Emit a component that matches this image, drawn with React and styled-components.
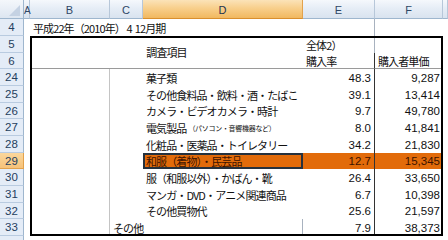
import React from 'react';
import styled, { createGlobalStyle } from 'styled-components';

const GlobalStyle = createGlobalStyle`
	html, body {
		margin: 0;
		padding: 0;
		background: #ffffff;
		overflow: hidden;
	}
`;

const columns = ['A', 'B', 'C', 'D', 'E', 'F', ''];
const rowNames = ['4', '5', '6', '24', '25', '26', '27', '28', '29', '30', '31', '32', '33', ''];
const rowHeights = [17, 17, 16, 17, 17, 16, 17, 17, 16, 17, 17, 16, 17, 17];

const items = [
	{ row: '24', name: '菓子類', rate: '48.3', price: '9,287' },
	{ row: '25', name: 'その他食料品・飲料・酒・たばこ', rate: '39.1', price: '13,414' },
	{ row: '26', name: 'カメラ・ビデオカメラ・時計', rate: '9.7', price: '49,780' },
	{ row: '27', name: '電気製品', note: '（パソコン・音響機器など）', rate: '8.0', price: '41,841' },
	{ row: '28', name: '化粧品・医薬品・トイレタリー', rate: '34.2', price: '21,830' },
	{ row: '29', name: '和服（着物）・民芸品', rate: '12.7', price: '15,345', active: true },
	{ row: '30', name: '服（和服以外）・かばん・靴', rate: '26.4', price: '33,650' },
	{ row: '31', name: 'マンガ・DVD・アニメ関連商品', rate: '6.7', price: '10,398' },
	{ row: '32', name: 'その他買物代', rate: '25.6', price: '21,597' },
	{ row: '33', name: 'その他', rate: '7.9', price: '38,373', other: true },
];

const App = () => {
	return (
		<>
			<GlobalStyle />
			<Sheet>
				<Corner>
					<svg width="24" height="19" viewBox="0 0 24 19">
						<polygon points="20,5 20,16 9,16" fill="#c5d2e3" />
					</svg>
				</Corner>
				{columns.map((c, i) => (
					<ColHead key={c + i} $col={i + 2} $active={c === 'D'} $narrow={c === 'A'}>
						{c}
					</ColHead>
				))}
				{rowNames.map((r, i) => (
					<RowHead key={r + i} $row={i + 2} $active={r === '29'}>
						{r}
					</RowHead>
				))}

				<Cell $col="3 / 8" $row={2}>
					平成22年（2010年） 4&nbsp;&nbsp;12月期
				</Cell>
				<Cell $col="6 / 7" $row="2 / 15" $right="#a8b2bf" />

				<Cell $col="3 / 6" $row="3 / 5" $center $bottom="#9a9a9a">
					調査項目
				</Cell>
				<Cell $col="6 / 8" $row={3}>全体2）</Cell>
				<Cell $col={6} $row={4} $bottom="#9a9a9a" $right="#333">
					購入率
				</Cell>
				<Cell $col={7} $row={4} $bottom="#9a9a9a">
					購入者単価
				</Cell>

				{items.map((it) => {
					const row = rowNames.indexOf(it.row) + 2;
					return (
						<React.Fragment key={it.row}>
							<Cell $col={3} $row={row} $right="#c4c4c4" />
							{it.other ? (
								<Cell $col="4 / 6" $row={row} $right="#a8b2bf">
									{it.name}
								</Cell>
							) : (
								<Cell $col={5} $row={row} $fill={it.active} $selected={it.active}>
									{it.name}
									{it.note && <Note>{it.note}</Note>}
								</Cell>
							)}
							<Cell $col={6} $row={row} $num $fill={it.active} $right="#333">
								{it.rate}
							</Cell>
							<Cell $col={7} $row={row} $num $fill={it.active}>
								{it.price}
							</Cell>
						</React.Fragment>
					);
				})}

				<Frame />
			</Sheet>
		</>
	);
};

const Sheet = styled.div`
	width: 448px;
	height: 240px;
	overflow: hidden;
	display: grid;
	grid-template-columns: 24px 6px 80px 33px 160px 72px 68px 1fr;
	grid-template-rows: 19px ${rowHeights.map((h) => `${h}px`).join(' ')};
	font-family: 'Noto Sans CJK JP', 'Liberation Sans', sans-serif;
	font-size: 11px;
	color: #111;
	background: #fff;
`;

const Corner = styled.div`
	grid-column: 1;
	grid-row: 1;
	background: linear-gradient(#f4f7fb, #dde6f1);
	border-right: 1px solid #9eb6ce;
	border-bottom: 1px solid #9eb6ce;
	box-sizing: border-box;
	svg {
		display: block;
	}
`;

const ColHead = styled.div`
	grid-column: ${(p) => p.$col};
	grid-row: 1;
	position: relative;
	z-index: ${(p) => (p.$narrow ? 1 : 0)};
	display: flex;
	align-items: center;
	justify-content: ${(p) => (p.$narrow ? 'flex-start' : 'center')};
	padding-left: 0;
	padding-top: 2px;
	box-sizing: border-box;
	overflow: ${(p) => (p.$narrow ? 'visible' : 'hidden')};
	font-family: 'Liberation Sans', sans-serif;
	font-size: ${(p) => (p.$narrow ? '10px' : '11px')};
	color: ${(p) => (p.$active ? '#1e3250' : '#2e4665')};
	background: ${(p) =>
		p.$active
			? 'linear-gradient(#fbe3b8 0%, #f8cf8c 45%, #f1b860 100%)'
			: 'linear-gradient(#f5f8fc 0%, #e6edf6 45%, #d9e3ef 100%)'};
	border-right: 1px solid ${(p) => (p.$active ? '#e3a24c' : '#b7c7d9')};
	border-bottom: 1px solid ${(p) => (p.$active ? '#d98f2e' : '#9eb6ce')};
`;

const RowHead = styled.div`
	grid-column: 1;
	grid-row: ${(p) => p.$row};
	display: flex;
	align-items: center;
	justify-content: center;
	box-sizing: border-box;
	font-family: 'Liberation Sans', sans-serif;
	font-size: 11.5px;
	color: #25405e;
	background: ${(p) =>
		p.$active ? 'linear-gradient(#fbd79c, #f6c27a)' : '#e4ecf7'};
	border-right: 1px solid ${(p) => (p.$active ? '#e3a24c' : '#9eb6ce')};
	border-bottom: 1px solid ${(p) => (p.$active ? '#e3a24c' : '#b9cbe0')};
`;

const Cell = styled.div`
	grid-column: ${(p) => p.$col};
	grid-row: ${(p) => p.$row};
	display: flex;
	align-items: center;
	justify-content: ${(p) => (p.$center ? 'center' : p.$num ? 'flex-end' : 'flex-start')};
	padding: 0 3px;
	box-sizing: border-box;
	white-space: nowrap;
	overflow: visible;
	letter-spacing: ${(p) => (p.$num ? '0' : '-0.9px')};
	font-family: ${(p) =>
		p.$num ? "'Liberation Sans', sans-serif" : "'Noto Sans CJK JP', sans-serif"};
	font-size: ${(p) => (p.$num ? '11.5px' : '11px')};
	line-height: 14px;
	color: ${(p) => (p.$fill ? '#3d1300' : '#111')};
	background: ${(p) => (p.$fill ? '#e26b0a' : 'transparent')};
	border-right: ${(p) => (p.$right ? `1px solid ${p.$right}` : 'none')};
	border-bottom: ${(p) => (p.$bottom ? `1px solid ${p.$bottom}` : 'none')};
	box-shadow: ${(p) => (p.$selected ? 'inset 0 0 0 2px #26313d' : 'none')};
`;

const Note = styled.span`
	font-size: 7px;
	letter-spacing: -0.3px;
	margin-left: 2px;
`;

const Frame = styled.div`
	grid-column: 3 / 8;
	grid-row: 3 / 15;
	border: 2px solid #000;
	box-sizing: border-box;
	pointer-events: none;
	z-index: 2;
`;

export default App;
